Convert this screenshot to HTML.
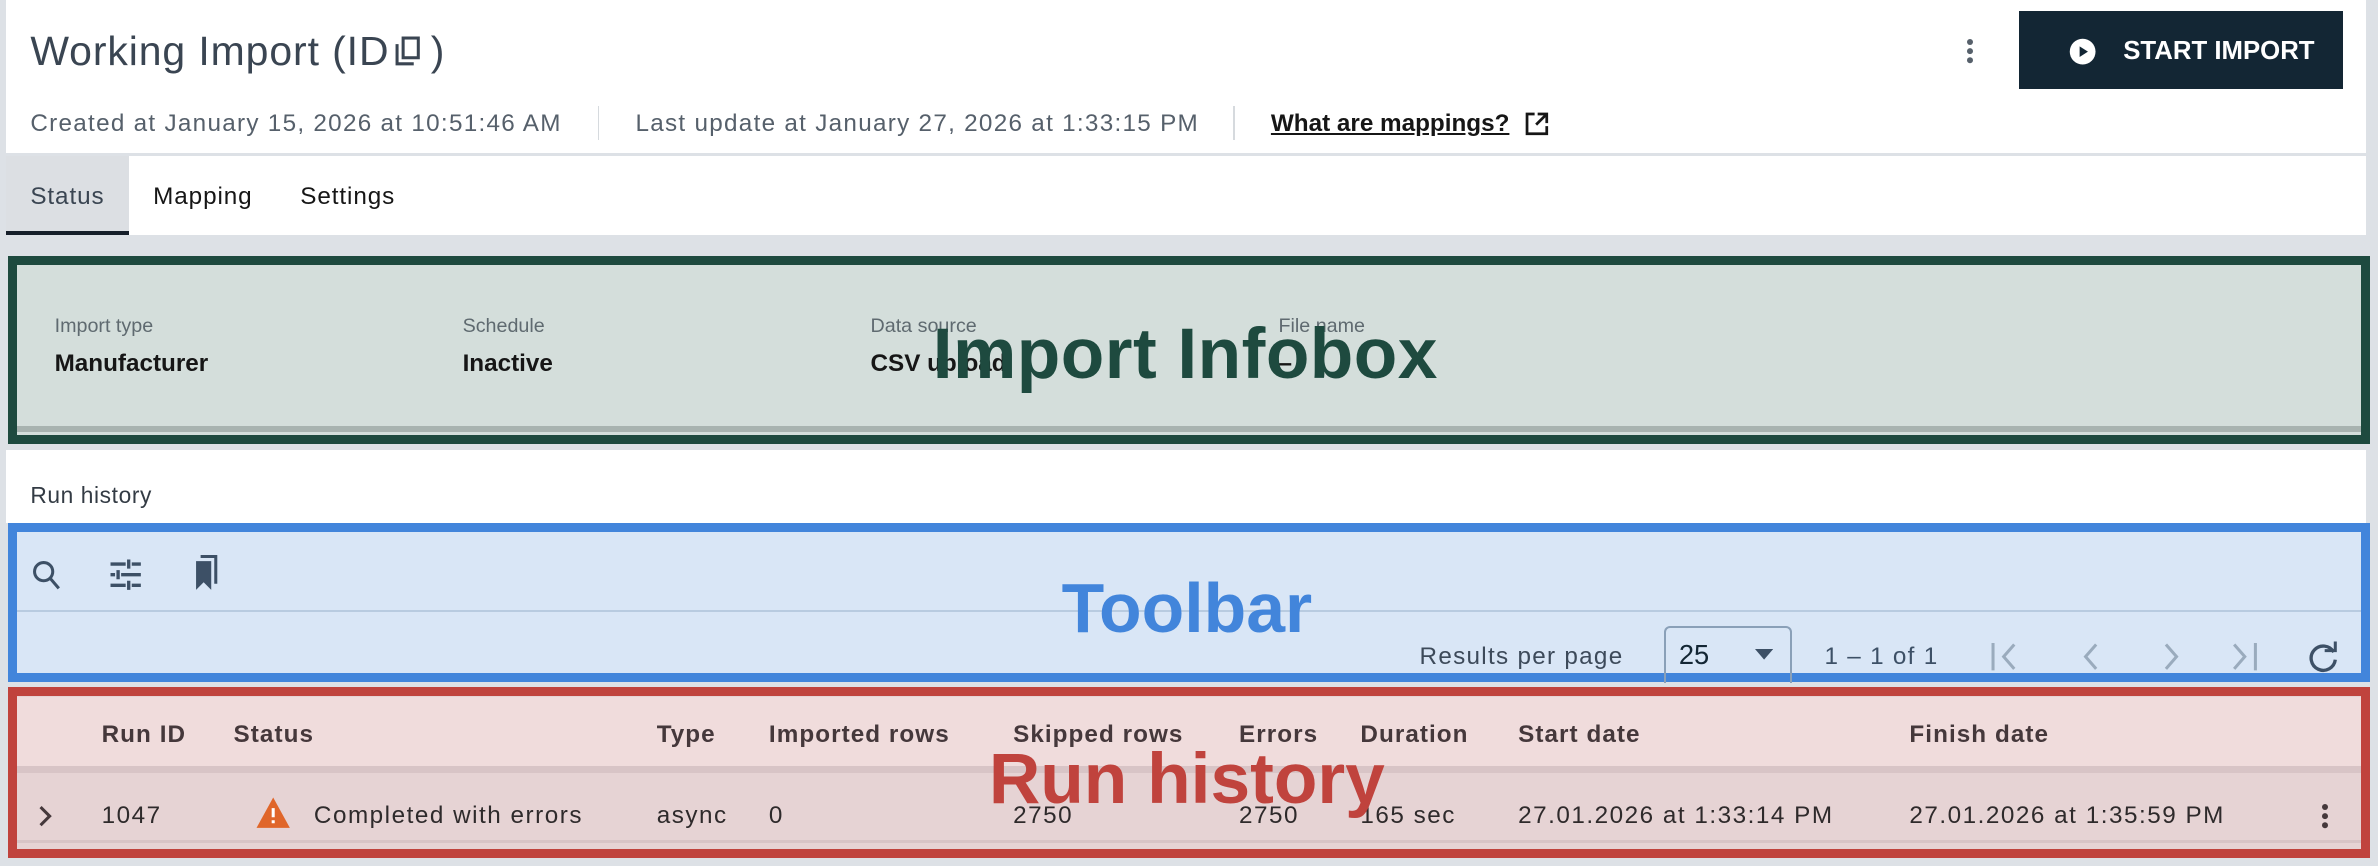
<!DOCTYPE html>
<html><head><meta charset="utf-8"><style>
html,body{margin:0;padding:0;}
body{width:2378px;height:866px;overflow:hidden;background:#dde1e6;font-family:"Liberation Sans",sans-serif;}
#z{zoom:1.5166;position:relative;width:1568px;height:571px;}
.a{position:absolute;white-space:nowrap;}
.t16{font-size:16px;line-height:20px;}
.ls{letter-spacing:0.85px;}
svg{position:absolute;}
</style></head><body><div id="z">
<!-- header panel -->
<div class="a" style="left:4px;top:0;width:1556px;height:101px;background:#fff"></div>
<div class="a" style="left:4px;top:103px;width:1556px;height:52px;background:#fff"></div>
<div class="a" style="left:20px;top:18px;font-size:27px;line-height:32px;color:#3a4552;letter-spacing:0.6px">Working Import (ID</div>
<div class="a" style="left:284px;top:18px;font-size:27px;line-height:32px;color:#3a4552">)</div>
<svg style="left:258px;top:23px" width="22" height="22" viewBox="0 0 22 22" fill="none" stroke="#3a4552" stroke-width="2"><rect x="8" y="2" width="10" height="13"/><path d="M4 6v13h11"/></svg>
<div class="a t16 ls" style="left:20px;top:72px;color:#56606b">Created at January 15, 2026 at 10:51:46 AM</div>
<div class="a" style="left:394px;top:70px;width:1px;height:22px;background:#d6dade"></div>
<div class="a t16 ls" style="left:419px;top:72px;color:#56606b">Last update at January 27, 2026 at 1:33:15 PM</div>
<div class="a" style="left:813px;top:70px;width:1px;height:22px;background:#d6dade"></div>
<div class="a t16" style="left:838px;top:72px;color:#161616;text-decoration:underline;font-weight:bold">What are mappings?</div>
<svg style="left:1005px;top:73px" width="17" height="17" viewBox="0 0 17 17" fill="none" stroke="#161616" stroke-width="1.8"><path d="M7 2H2v13h13v-5M9 2h6v6M15 2L8 9"/></svg>
<!-- kebab -->
<div class="a" style="left:1297px;top:26px;width:4px;height:4px;border-radius:2px;background:#56606b;box-shadow:0 6px 0 #56606b,0 12px 0 #56606b"></div>
<div class="a" style="left:1331px;top:7px;width:214px;height:52px;background:#132634"></div>
<svg style="left:1364px;top:25px" width="18" height="18" viewBox="0 0 18 18"><circle cx="9" cy="9" r="8.5" fill="#fff"/><path d="M7 5.5v7l5.5-3.5z" fill="#132634"/></svg>
<div class="a" style="left:1400px;top:24px;font-size:17px;line-height:20px;color:#fff;font-weight:bold">START IMPORT</div>
<!-- tabs -->
<div class="a" style="left:4px;top:103px;width:81px;height:50px;background:#dcdfe3"></div>
<div class="a" style="left:4px;top:152px;width:81px;height:3px;background:#161f2a"></div>
<div class="a t16 ls" style="left:20px;top:120px;color:#3a4552;letter-spacing:0.6px">Status</div>
<div class="a t16 ls" style="left:101px;top:120px;color:#161616;letter-spacing:0.6px">Mapping</div>
<div class="a t16 ls" style="left:198px;top:120px;color:#161616;letter-spacing:0.6px">Settings</div>
<!-- infobox -->
<div class="a" style="left:5px;top:169px;width:1546px;height:112px;border:6.5px solid #1e4a3f;background:#d4dedb"></div>
<div class="a" style="left:11px;top:281px;width:1546px;height:4px;background:#a8b3b0"></div>
<div class="a" style="left:36px;top:208px;font-size:13px;color:#5f6a70">Import type</div>
<div class="a" style="left:305px;top:208px;font-size:13px;color:#5f6a70">Schedule</div>
<div class="a" style="left:574px;top:208px;font-size:13px;color:#5f6a70">Data source</div>
<div class="a" style="left:843px;top:208px;font-size:13px;color:#5f6a70">File name</div>
<div class="a t16" style="left:36px;top:230px;color:#161616;font-weight:bold">Manufacturer</div>
<div class="a t16" style="left:305px;top:230px;color:#161616;font-weight:bold">Inactive</div>
<div class="a t16" style="left:574px;top:230px;color:#161616;font-weight:bold">CSV upload</div>
<div class="a t16" style="left:843px;top:230px;color:#161616;font-weight:bold">–</div>
<div class="a" style="left:615px;top:206px;font-size:47px;line-height:56px;font-weight:bold;color:#1e4a3f;letter-spacing:0.3px">Import Infobox</div>
<!-- run history white -->
<div class="a" style="left:4px;top:297px;width:1556px;height:48px;background:#fff"></div>
<div class="a" style="left:20px;top:318px;font-size:15px;line-height:18px;color:#333b44;letter-spacing:0.4px">Run history</div>
<!-- toolbar -->
<div class="a" style="left:5px;top:345px;width:1546px;height:93px;border:6.5px solid #4285db;background:#d9e6f6"></div>
<div class="a" style="left:11px;top:402px;width:1546px;height:1.5px;background:#b8cbe0"></div>
<svg style="left:20px;top:368px" width="22" height="22" viewBox="0 0 22 22" fill="none" stroke="#3d5066" stroke-width="2"><circle cx="9" cy="9" r="6"/><path d="M13 13l6 7"/></svg>
<svg style="left:72px;top:368px" width="22" height="22" viewBox="0 0 22 22" fill="none" stroke="#3d5066" stroke-width="2.2"><path d="M1 4h10M15 4h6M13 1v6M1 11h3M8 11h13M6 8v6M1 18h10M15 18h6M13 15v6"/></svg>
<svg style="left:125px;top:366px" width="22" height="24" viewBox="0 0 22 24" fill="#3d5066"><path d="M4 4h10v19l-5-5-5 5z"/><path d="M7 1h10v18" fill="none" stroke="#3d5066" stroke-width="2"/></svg>
<div class="a" style="left:700px;top:373px;font-size:46px;line-height:56px;font-weight:bold;color:#4285db">Toolbar</div>
<div class="a t16 ls" style="left:936px;top:423px;color:#3d4a5a">Results per page</div>
<div class="a" style="left:1097px;top:413px;width:82px;height:36px;border:1.5px solid #8aa0b8;border-bottom:none;border-radius:4px 4px 0 0"></div>
<div class="a" style="left:1107px;top:421px;font-size:18px;line-height:22px;color:#132634">25</div>
<svg style="left:1157px;top:428px" width="12" height="8" viewBox="0 0 12 8"><path d="M0 0h12L6 7z" fill="#3d5066"/></svg>
<div class="a t16 ls" style="left:1203px;top:423px;color:#3d5066">1 – 1 of 1</div>
<svg style="left:1312px;top:422px;overflow:visible" width="100" height="22" fill="none" stroke="#9aabbd" stroke-width="2"><path d="M2 2v18M16 3l-7 8 7 8"/><path d="M70 3l-7 8 7 8"/><path d="M116 3l7 8-7 8"/><path d="M161 3l7 8-7 8M175 2v18"/></svg>
<svg style="left:1522px;top:422px" width="22" height="22" viewBox="0 0 22 22" fill="none" stroke="#3d5066" stroke-width="2.2"><path d="M17 8A8 8 0 1 0 18 13"/><path d="M11 7h7V1" stroke-width="2"/></svg>
<!-- run history table -->
<div class="a" style="left:5px;top:453px;width:1546px;height:101px;border:6.5px solid #c0433d;background:#e6d3d4"></div>
<div class="a" style="left:11px;top:459.5px;width:1546px;height:48px;background:#f0dcdc"></div>
<div class="a" style="left:11px;top:505px;width:1546px;height:5px;background:#d8c4c6"></div>
<div class="a" style="left:11px;top:554px;width:1546px;height:2px;background:#d8c4c6"></div>
<div style="color:#45383b;font-weight:bold;letter-spacing:0.7px">
<div class="a t16" style="left:67px;top:475px">Run ID</div>
<div class="a t16" style="left:154px;top:475px">Status</div>
<div class="a t16" style="left:433px;top:475px">Type</div>
<div class="a t16" style="left:507px;top:475px">Imported rows</div>
<div class="a t16" style="left:668px;top:475px">Skipped rows</div>
<div class="a t16" style="left:817px;top:475px">Errors</div>
<div class="a t16" style="left:897px;top:475px">Duration</div>
<div class="a t16" style="left:1001px;top:475px">Start date</div>
<div class="a t16" style="left:1259px;top:475px">Finish date</div>
</div>
<div style="color:#2e2a2b;letter-spacing:1px">
<svg style="left:24px;top:530px" width="12" height="16" viewBox="0 0 12 16" fill="none" stroke="#45383b" stroke-width="2"><path d="M3 2l6 6-6 6"/></svg>
<div class="a t16" style="left:67px;top:528px">1047</div>
<svg style="left:168px;top:525px" width="24" height="22" viewBox="0 0 24 22"><path d="M12 1L23 21H1z" fill="#e0662a"/><path d="M12 8v6M12 16v2" stroke="#fff" stroke-width="2"/></svg>
<div class="a t16" style="left:207px;top:528px">Completed with errors</div>
<div class="a t16" style="left:433px;top:528px">async</div>
<div class="a t16" style="left:507px;top:528px">0</div>
<div class="a t16" style="left:668px;top:528px">2750</div>
<div class="a t16" style="left:817px;top:528px">2750</div>
<div class="a t16" style="left:897px;top:528px">165 sec</div>
<div class="a t16" style="left:1001px;top:528px">27.01.2026 at 1:33:14 PM</div>
<div class="a t16" style="left:1259px;top:528px">27.01.2026 at 1:35:59 PM</div>
<div class="a" style="left:1531px;top:530px;width:4px;height:4px;border-radius:2px;background:#45383b;box-shadow:0 6px 0 #45383b,0 12px 0 #45383b"></div>
</div>
<div class="a" style="left:652px;top:486px;font-size:47px;line-height:56px;font-weight:bold;color:#c0433d">Run history</div>
</div></body></html>
